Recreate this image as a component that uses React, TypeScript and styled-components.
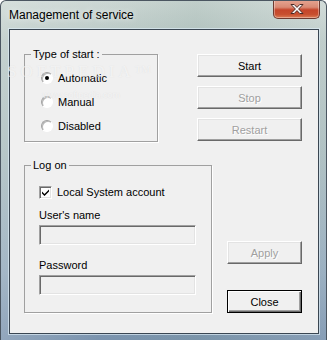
import styled, { createGlobalStyle } from 'styled-components'

const GlobalStyle = createGlobalStyle`
  html, body {
    margin: 0;
    padding: 0;
    background: #ffffff;
  }
  body {
    font-family: 'Liberation Sans', Arial, sans-serif;
  }
`

type RadioProps = { label: string; checked?: boolean }

function RadioOption(props: RadioProps) {
  return (
    <OptionRow>
      <RadioCircle>{props.checked && <RadioDot />}</RadioCircle>
      <OptionLabel>{props.label}</OptionLabel>
    </OptionRow>
  )
}

export default function App() {
  return (
    <>
      <GlobalStyle />
      <Window>
        <TitleBar>
          <Title>Management of service</Title>
          <CloseButton>
            <svg width='16' height='12' viewBox='0 0 16 12'>
              <path
                d='M2 1.5h3.2L8 4.4l2.8-2.9H14L9.6 6 14 10.5h-3.2L8 7.6l-2.8 2.9H2L6.4 6z'
                fill='#ffffff'
                stroke='#4a2a26'
                strokeWidth='1'
                strokeLinejoin='round'
              />
            </svg>
          </CloseButton>
        </TitleBar>
        <Client>
          <TopRow>
            <StartGroup>
              <Legend>Type of start :</Legend>
              <GroupBody>
                <RadioOption label='Automatic' checked />
                <RadioOption label='Manual' />
                <RadioOption label='Disabled' />
              </GroupBody>
            </StartGroup>
            <ActionColumn>
              <Button>Start</Button>
              <Button disabled>Stop</Button>
              <Button disabled>Restart</Button>
            </ActionColumn>
          </TopRow>
          <BottomRow>
            <LogonGroup>
              <Legend>Log on</Legend>
              <LogonBody>
                <CheckRow>
                  <CheckBox>
                    <svg width='9' height='9' viewBox='0 0 9 9'>
                      <path d='M1 3.5l2.5 2.5L8 1.5v2L3.5 8 1 5.5z' fill='#000' />
                    </svg>
                  </CheckBox>
                  <OptionLabel>Local System account</OptionLabel>
                </CheckRow>
                <FieldLabel $gap={10}>User's name</FieldLabel>
                <EditBox />
                <FieldLabel $gap={14}>Password</FieldLabel>
                <EditBox />
              </LogonBody>
            </LogonGroup>
            <DialogColumn>
              <Button $narrow disabled>Apply</Button>
              <Button $narrow $default>Close</Button>
            </DialogColumn>
          </BottomRow>
        </Client>
        <Watermark>
          <WatermarkBig>SOFTPEDIA™</WatermarkBig>
          <WatermarkSmall>www.softpedia.com</WatermarkSmall>
        </Watermark>
      </Window>
    </>
  )
}

const Window = styled.div`
  position: relative;
  box-sizing: border-box;
  width: 327px;
  height: 340px;
  display: flex;
  flex-direction: column;
  padding: 0 7px 6px 8px;
  border: 1px solid #4b5661;
  border-bottom: none;
  border-radius: 6px 6px 0 0;
  background:
    linear-gradient(90deg, rgba(255, 255, 255, 0.18), rgba(255, 255, 255, 0) 30%, rgba(120, 150, 140, 0.15) 60%, rgba(255, 255, 255, 0.1)),
    linear-gradient(180deg, #cdd8d5 0%, #b9c8c5 12%, #a8bbbd 45%, #91a8bb 80%, #7a93ae 100%);
  overflow: hidden;
`

const TitleBar = styled.div`
  height: 28px;
  display: flex;
  justify-content: space-between;
  align-items: flex-start;
`

const Title = styled.div`
  padding-top: 7px;
  font-family: 'Liberation Sans', Arial, sans-serif;
  font-size: 12px;
  color: #000;
  text-shadow: 0 0 6px rgba(255, 255, 255, 0.9);
`

const CloseButton = styled.div`
  box-sizing: border-box;
  width: 47px;
  height: 19px;
  margin-top: -1px;
  margin-right: -1px;
  display: flex;
  align-items: center;
  justify-content: center;
  border: 1px solid #6e3a30;
  border-top: none;
  border-radius: 0 0 5px 5px;
  background: linear-gradient(180deg, #e6a592 0%, #d98a74 40%, #c5452a 55%, #c84f2f 80%, #dc7c55 100%);
  box-shadow: inset 0 0 0 1px rgba(255, 255, 255, 0.35);
`

const Client = styled.div`
  flex: 1;
  box-sizing: border-box;
  display: flex;
  flex-direction: column;
  padding: 18px 0 0 14px;
  background: #f0f0f0;
  border: 1px solid #3a4652;
  box-shadow: 0 0 0 1px rgba(220, 235, 245, 0.7);
`

const TopRow = styled.div`
  display: flex;
  align-items: flex-start;
`

const Group = styled.fieldset`
  box-sizing: border-box;
  margin: 0;
  padding: 0 0 0 6px;
  min-width: 0;
  border: 1px solid #a0a0a0;
  box-shadow: 1px 1px 0 #ffffff;
`

const StartGroup = styled(Group)`
  width: 134px;
  height: 94px;
`

const LogonGroup = styled(Group)`
  width: 188px;
  height: 154px;
`

const Legend = styled.legend`
  padding: 0 2px;
  font-size: 11px;
  line-height: 13px;
  color: #000;
`

const GroupBody = styled.div`
  display: flex;
  flex-direction: column;
  padding: 5px 0 0 10px;
`

const OptionRow = styled.div`
  height: 24px;
  display: flex;
  align-items: center;
  gap: 5px;
`

const RadioCircle = styled.span`
  box-sizing: border-box;
  width: 12px;
  height: 12px;
  display: flex;
  align-items: center;
  justify-content: center;
  border-radius: 50%;
  border: 1px solid;
  border-color: #a0a0a0 #ffffff #ffffff #a0a0a0;
  background: #ffffff;
  box-shadow: inset 1px 1px 0 #b8b8b8;
`

const RadioDot = styled.span`
  width: 4px;
  height: 4px;
  border-radius: 50%;
  background: #000;
`

const OptionLabel = styled.span`
  font-size: 11px;
  line-height: 13px;
  color: #000;
`

const ActionColumn = styled.div`
  display: flex;
  flex-direction: column;
  gap: 9px;
  margin: 6px 0 0 39px;
`

const Button = styled.button<{ $narrow?: boolean; $default?: boolean }>`
  box-sizing: border-box;
  width: ${(p) => (p.$narrow ? 75 : 105)}px;
  height: 23px;
  padding: 0;
  font-family: 'Liberation Sans', Arial, sans-serif;
  font-size: 11px;
  color: #000;
  background: #f0f0f0;
  border: 1px solid;
  border-color: ${(p) => (p.$default ? '#000000' : '#ffffff #696969 #696969 #ffffff')};
  box-shadow: ${(p) =>
    p.$default
      ? 'inset 1px 1px 0 #ffffff, inset -1px -1px 0 #696969, inset -2px -2px 0 #a0a0a0'
      : 'inset -1px -1px 0 #a0a0a0, inset 1px 1px 0 #e3e3e3'};

  &:disabled {
    color: #a0a0a0;
    text-shadow: 1px 1px 0 #ffffff;
  }
`

const BottomRow = styled.div`
  display: flex;
  align-items: flex-end;
  margin-top: 17px;
`

const LogonBody = styled.div`
  display: flex;
  flex-direction: column;
  padding: 14px 0 0 8px;
`

const CheckRow = styled.div`
  display: flex;
  align-items: center;
  gap: 5px;
  height: 13px;
`

const CheckBox = styled.span`
  box-sizing: border-box;
  width: 13px;
  height: 13px;
  display: flex;
  align-items: center;
  justify-content: center;
  background: #ffffff;
  border: 1px solid;
  border-color: #a0a0a0 #ffffff #ffffff #a0a0a0;
  box-shadow: inset 1px 1px 0 #696969, inset -1px -1px 0 #e3e3e3;
`

const FieldLabel = styled.div<{ $gap: number }>`
  margin-top: ${(p) => p.$gap}px;
  font-size: 11px;
  line-height: 13px;
  color: #000;
`

const EditBox = styled.div`
  box-sizing: border-box;
  width: 157px;
  height: 20px;
  margin-top: 3px;
  background: #f0f0f0;
  border: 1px solid;
  border-color: #a0a0a0 #ffffff #ffffff #a0a0a0;
  box-shadow: inset 1px 1px 0 #696969, inset -1px -1px 0 #e3e3e3;
`

const DialogColumn = styled.div`
  display: flex;
  flex-direction: column;
  gap: 26px;
  margin-left: 15px;
`

const Watermark = styled.div`
  position: absolute;
  left: 6px;
  top: 61px;
  display: flex;
  flex-direction: column;
  align-items: center;
  pointer-events: none;
  color: rgba(255, 255, 255, 0.6);
  font-family: 'Liberation Serif', serif;
  text-shadow: 0 0 1px rgba(190, 190, 190, 0.4);
`

const WatermarkBig = styled.div`
  font-size: 17px;
  letter-spacing: 4px;
`

const WatermarkSmall = styled.div`
  margin-top: 8px;
  font-family: 'Liberation Sans', Arial, sans-serif;
  font-size: 9px;
`
